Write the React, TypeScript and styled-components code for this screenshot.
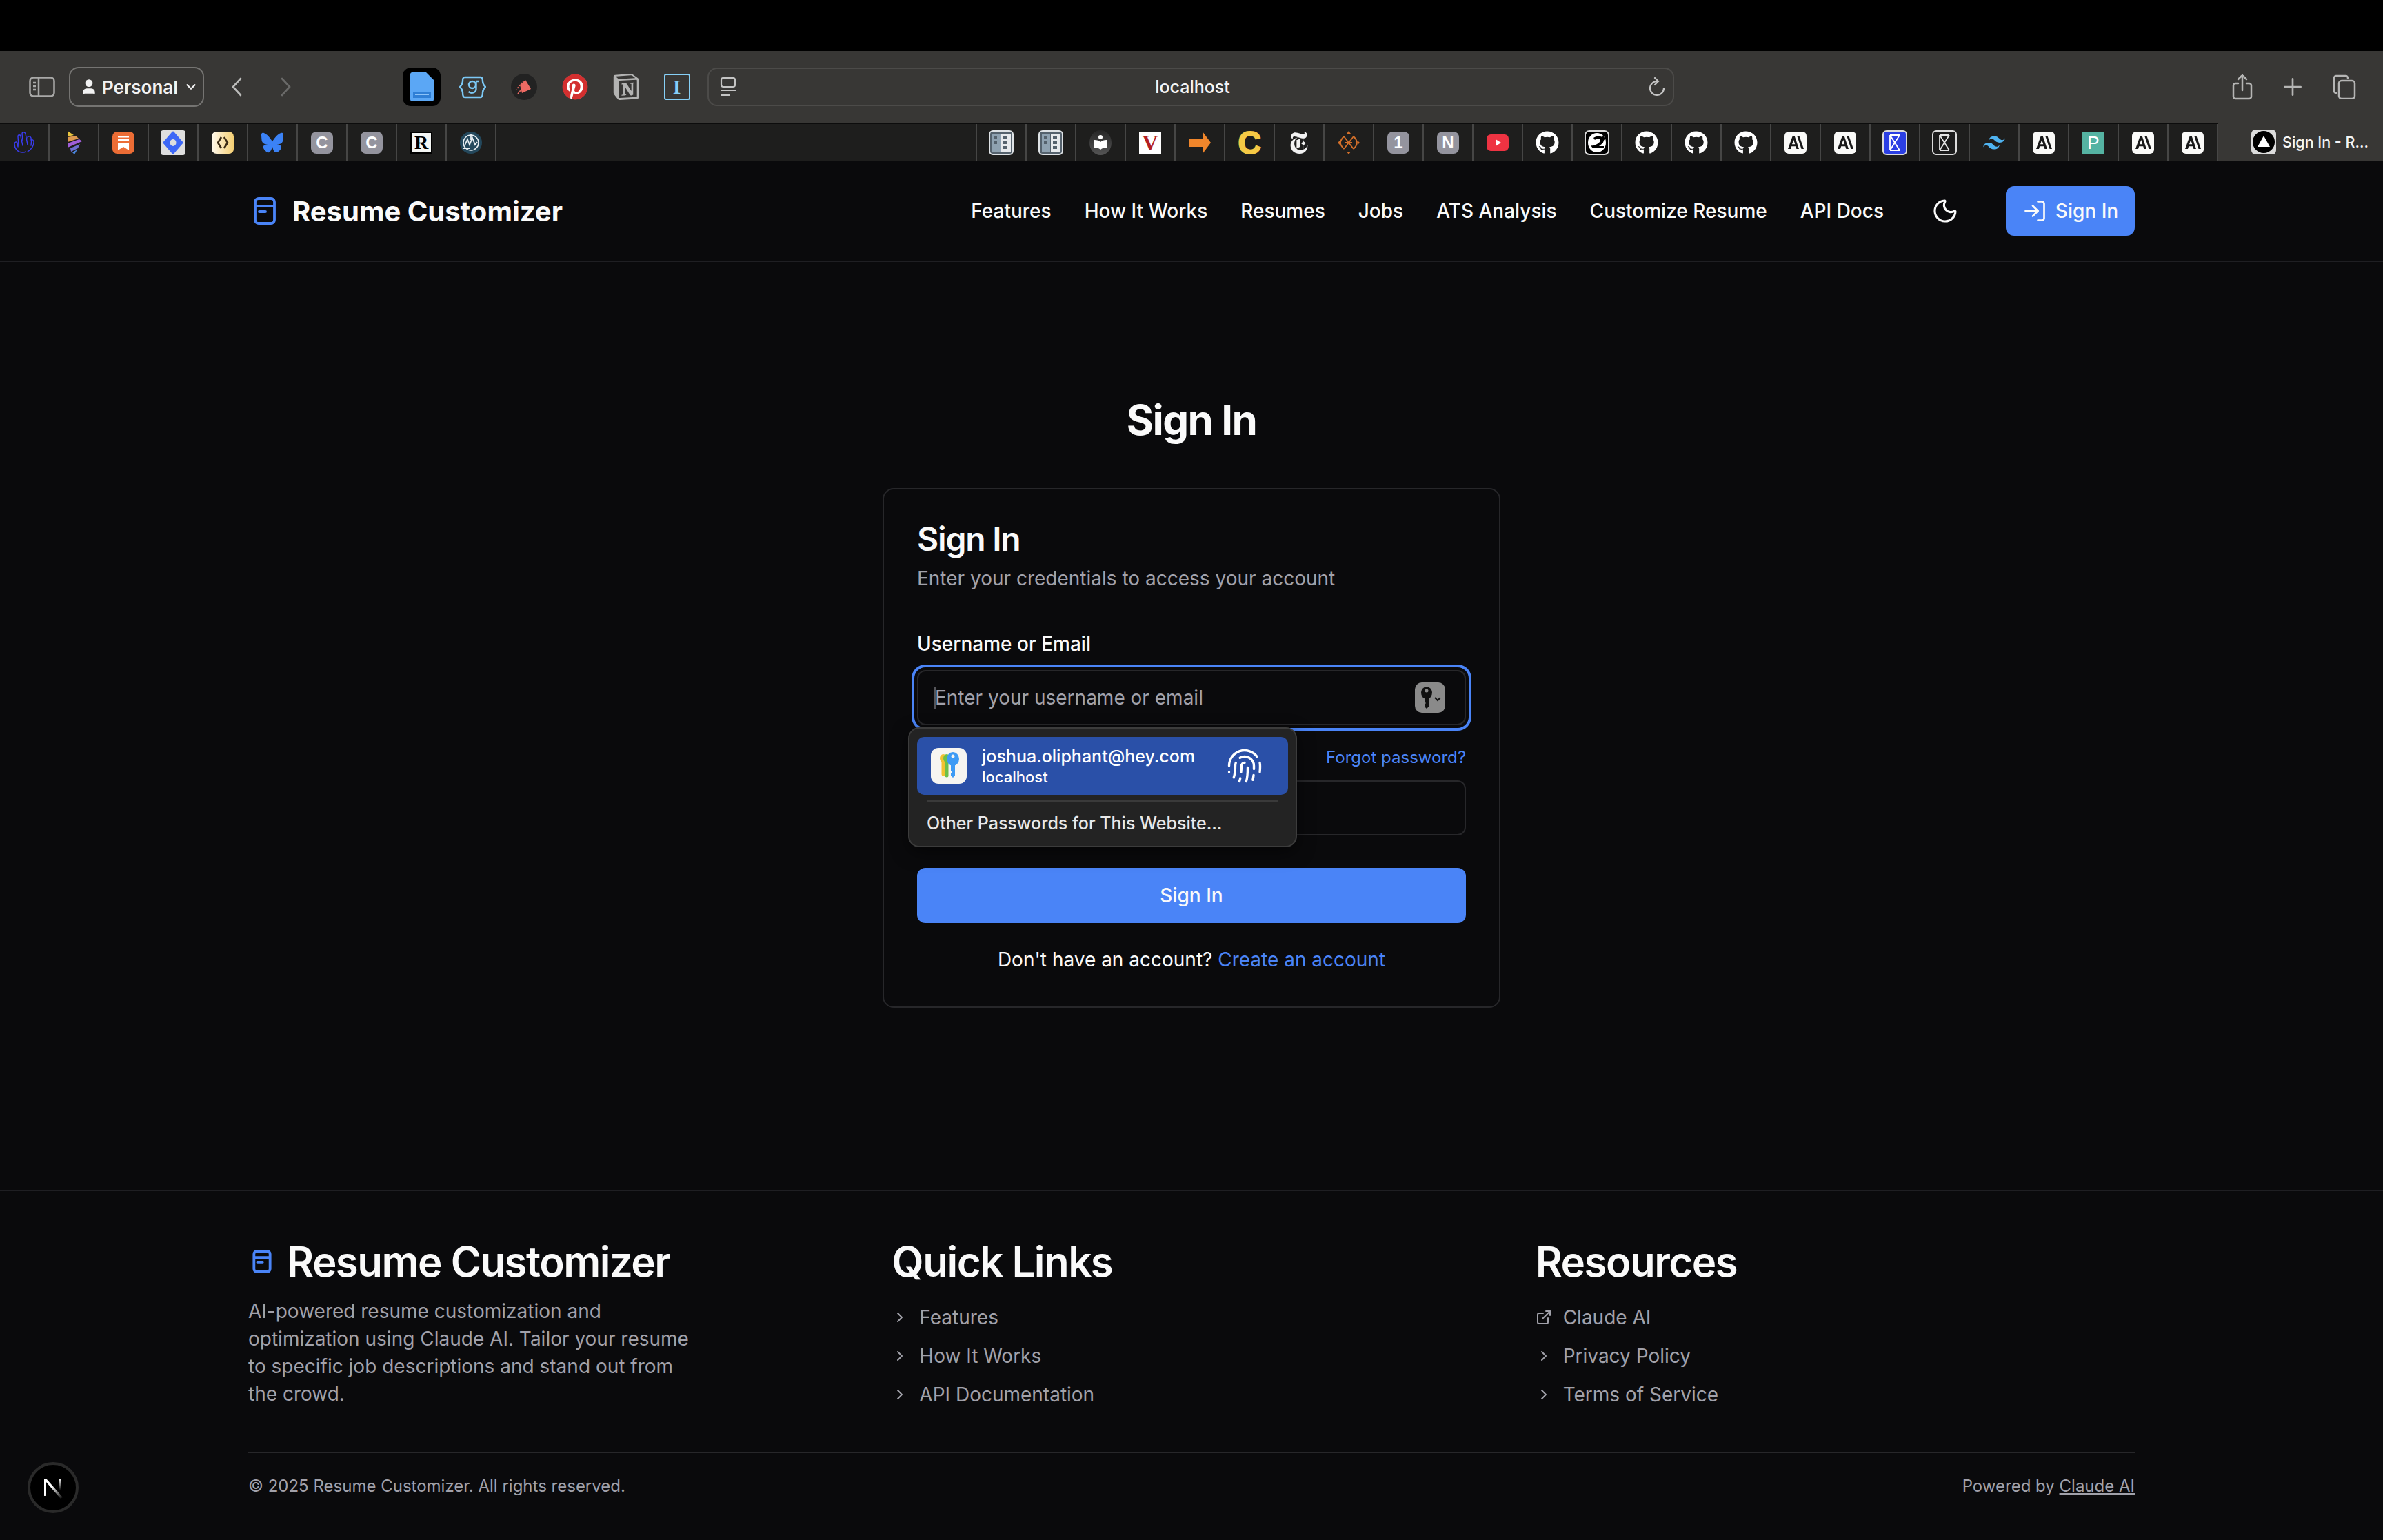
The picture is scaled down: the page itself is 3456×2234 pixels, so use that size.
import React from 'react';
import styled, { createGlobalStyle } from 'styled-components';
import { ChevronDown, ChevronRight, ExternalLink, Fingerprint, LogIn, Moon, Plus, User } from 'lucide-react';
import { FaBluesky, FaGithub, FaPinterest } from 'react-icons/fa6';
import { SiNewyorktimes, SiNotion, SiTailwindcss } from 'react-icons/si';

const GlobalStyle = createGlobalStyle`
  html, body { margin: 0; padding: 0; background: #0a0a0c; }
  * { box-sizing: border-box; }
  body { font-family: Inter, "Liberation Sans", sans-serif; color: #fafafa; }
`;

const Page = styled.div`
  display: flex;
  flex-direction: column;
  height: 2234px;
  overflow: hidden;
  position: relative;
  background: #0a0a0c;
`;

/* browser chrome */
const TopBlack = styled.div`
  height: 74px;
  background: #000;
  flex: none;
`;

const Toolbar = styled.div`
  height: 104px;
  flex: none;
  background: #383735;
  display: flex;
  align-items: center;
  padding: 0 39px 0 42px;
`;

const ChromeIcon = styled.svg<{ $ml?: number }>`
  flex: none;
  display: block;
  margin-left: ${p => p.$ml ?? 0}px;
`;

const ProfileButton = styled.div`
  margin-left: 20px;
  width: 196px;
  height: 58px;
  flex: none;
  border: 2px solid #757472;
  border-radius: 14px;
  display: flex;
  align-items: center;
  gap: 6px;
  padding-left: 14px;
  font-size: 26px;
  font-weight: 600;
  color: #f2f2f2;
`;

const ProfileChevron = styled(ChevronDown)`
  margin-left: 2px;
`;

const FavRow = styled.div`
  margin-left: 161px;
  display: flex;
  gap: 19px;
  flex: none;
`;

const FavSlot = styled.div<{ $active?: boolean }>`
  width: 55px;
  height: 56px;
  border-radius: 12px;
  display: flex;
  align-items: center;
  justify-content: center;
  background: ${p => (p.$active ? '#000' : 'transparent')};
`;

const AddressBar = styled.div`
  margin-left: 17px;
  width: 1402px;
  height: 56px;
  flex: none;
  border: 2px solid #4c4b49;
  border-radius: 14px;
  display: grid;
  grid-template-columns: 1fr auto 1fr;
  align-items: center;
  padding: 0 11px 0 16px;
`;

const AddressText = styled.div`
  font-size: 25px;
  color: #f4f4f4;
  font-weight: 500;
`;

const AddressEnd = styled.div`
  display: flex;
  justify-content: flex-end;
`;

const ToolbarRight = styled.div`
  margin-left: auto;
  display: flex;
  align-items: center;
  gap: 38px;
  color: #b5b5b4;
`;

const TabBar = styled.div`
  height: 56px;
  flex: none;
  display: flex;
  background: #383735;
`;

const TabStrip = styled.div`
  flex: 1;
  display: flex;
  justify-content: space-between;
  background: #1e1e1d;
  border-top: 2px solid #0c0c0c;
`;

const TabGroup = styled.div<{ $right?: boolean }>`
  display: flex;
  border-left: ${p => (p.$right ? '2px solid #464645' : 'none')};
`;

const PinnedTab = styled.div`
  width: 72px;
  height: 54px;
  border-right: 2px solid #464645;
  display: flex;
  align-items: center;
  justify-content: center;
  color: #fff;
`;

const ActiveTab = styled.div`
  width: 239px;
  flex: none;
  display: flex;
  align-items: center;
  padding-left: 48px;
  gap: 9px;
  font-size: 21.5px;
  font-weight: 500;
  color: #f4f4f4;
  white-space: nowrap;
`;

const LetterTile = styled.div<{ $bg: string; $color: string; $radius?: number; $serif?: boolean; $size?: number; $border?: string; $box?: number; $weight?: number }>`
  width: ${p => p.$box ?? 32}px;
  height: ${p => p.$box ?? 32}px;
  display: flex;
  align-items: center;
  justify-content: center;
  background: ${p => p.$bg};
  color: ${p => p.$color};
  border-radius: ${p => p.$radius ?? 8}px;
  border: ${p => p.$border ?? 'none'};
  font-family: ${p => (p.$serif ? '"Liberation Serif", serif' : '"Liberation Sans", sans-serif')};
  font-size: ${p => p.$size ?? 24}px;
  font-weight: ${p => p.$weight ?? 700};
`;

const BigLetter = styled.div`
  font-family: "Liberation Sans", sans-serif;
  font-size: 46px;
  font-weight: 700;
  line-height: 1;
  color: #f5c945;
  -webkit-text-stroke: 2px #f5c945;
`;

const Anthropic = () => (
  <svg width="32" height="32" viewBox="0 0 32 32">
    <rect width="32" height="32" rx="6" fill="#fafaf8" />
    <path d="M5 25 11.5 7h3.4L21 25h-3.6l-1.2-3.8h-6L9 25Zm6-6.8h4.3L13.2 12Z" fill="#191919" />
    <path d="M18.5 7h3.2L28 25h-3.5Z" fill="#191919" />
  </svg>
);

const SheetIcon = () => (
  <svg width="36" height="36" viewBox="0 0 36 36">
    <rect width="36" height="36" rx="6" fill="#dfe3e6" />
    <rect x="2" y="2" width="32" height="32" rx="4" fill="#55626d" />
    <rect x="5" y="5" width="12" height="26" fill="#8fa2b1" />
    <rect x="18" y="5" width="14" height="26" fill="#e6e9ec" />
    <rect x="8" y="9" width="4" height="4" fill="#55626d" />
    <rect x="8" y="16" width="4" height="4" fill="#55626d" />
    <rect x="21" y="9" width="6" height="4" fill="#55626d" />
    <rect x="21" y="16" width="6" height="4" fill="#55626d" />
    <rect x="21" y="23" width="6" height="4" fill="#55626d" />
  </svg>
);

const Hourglass = ({ bg, line }: { bg: string; line: string }) => (
  <svg width="36" height="36" viewBox="0 0 36 36">
    <rect x="1" y="1" width="34" height="34" rx="5" fill={bg} stroke="#dcdcdc" strokeWidth="2" />
    <path d="M11 7h14M11 29h14M11 7l14 22M25 7 11 29M11 7v22" stroke={line} strokeWidth="1.8" fill="none" />
  </svg>
);

type TabKind =
  | 'hand' | 'cone' | 'substack' | 'diamond' | 'code' | 'bluesky' | 'c' | 'r' | 'globe'
  | 'sheet' | 'book' | 'v' | 'arrow' | 'bigC' | 'nyt' | 'ornament' | 'one' | 'n' | 'youtube'
  | 'github' | 'swirl' | 'anthropic' | 'glassBlue' | 'glassDark' | 'tailwind' | 'p';

const leftTabs: TabKind[] = ['hand', 'cone', 'substack', 'diamond', 'code', 'bluesky', 'c', 'c', 'r', 'globe'];
const rightTabs: TabKind[] = [
  'sheet', 'sheet', 'book', 'v', 'arrow', 'bigC', 'nyt', 'ornament', 'one', 'n', 'youtube', 'github', 'swirl',
  'github', 'github', 'github', 'anthropic', 'anthropic', 'glassBlue', 'glassDark', 'tailwind', 'anthropic', 'p',
  'anthropic', 'anthropic',
];

const TabIcon = ({ kind }: { kind: TabKind }) => {
  switch (kind) {
    case 'hand':
      return (
        <svg width="30" height="32" viewBox="0 0 30 32" fill="none" stroke="#3a3cf0" strokeWidth="1.4" strokeLinecap="round">
          <path d="M1 18c0 6 4 12 12 12 2 0 3 0 4-1" />
          <path d="M1 18c0-3 3-4 4-2l1 6" />
          <path d="M7 21 6 7c0-3 4-3 4 0l3 13" />
          <path d="M13 13 12 3c0-3 4-3 5 0l3 16" />
          <path d="M20 9c0-3 4-3 5 0 1 4 1 5 0 11" />
          <path d="M25 12c2-1 4 0 4 3 0 6-4 11-9 14" />
        </svg>
      );
    case 'cone':
      return (
        <svg width="24" height="34" viewBox="0 0 24 34">
          <path d="M3 0 12 6 3 8Z" fill="#e8c53e" />
          <path d="M3 9 15 7l4 4-16 5Z" fill="#dd9850" />
          <path d="M3 18l17-6 4 3L3 24Z" fill="#a05ed8" />
          <path d="M7 25l14-6-3 6-10 5Z" fill="#6d6fd0" />
          <path d="M10 31l7-4-4 7Z" fill="#4a86e0" />
        </svg>
      );
    case 'substack':
      return (
        <svg width="32" height="32" viewBox="0 0 32 32">
          <rect width="32" height="32" rx="7" fill="#ec6d35" />
          <path d="M8 6h16v2.5H8ZM8 11h16v2.5H8ZM8 16h16v11l-8-5-8 5Z" fill="#fff" />
        </svg>
      );
    case 'diamond':
      return (
        <svg width="36" height="36" viewBox="0 0 36 36">
          <rect width="36" height="36" rx="4" fill="#dedede" />
          <path d="M18 3 31 18 18 33 5 18Z" fill="#3d67f6" stroke="#3d67f6" strokeWidth="3" strokeLinejoin="round" />
          <ellipse cx="18" cy="18" rx="4.5" ry="5" fill="#dedede" />
        </svg>
      );
    case 'code':
      return (
        <svg width="32" height="32" viewBox="0 0 32 32">
          <defs>
            <linearGradient id="creamTile" x1="0" x2="1" y1="0" y2="0">
              <stop offset="0" stopColor="#fff9ec" />
              <stop offset="1" stopColor="#f4cf72" />
            </linearGradient>
          </defs>
          <rect width="32" height="32" rx="7" fill="url(#creamTile)" />
          <path d="M14 8 9 16l5 8M18 8l5 8-5 8" fill="none" stroke="#3a2a14" strokeWidth="2.6" />
        </svg>
      );
    case 'bluesky':
      return <FaBluesky size={32} color="#3b82f6" />;
    case 'c':
      return <LetterTile $bg="#94949e" $color="#fff">C</LetterTile>;
    case 'r':
      return <LetterTile $bg="#f4f6f4" $color="#000" $radius={0} $serif $size={28} $border="2px solid #000">R</LetterTile>;
    case 'globe':
      return (
        <svg width="32" height="32" viewBox="0 0 32 32" fill="none">
          <circle cx="16" cy="16" r="16" fill="#24485c" />
          <path d="M5 24h9M7 20l4-9 3 8 4-10 4 10 3-4M16 4v8" stroke="#e8eef2" strokeWidth="1.8" />
          <circle cx="16" cy="16" r="11" stroke="#e8eef2" strokeWidth="1.5" />
        </svg>
      );
    case 'sheet':
      return <SheetIcon />;
    case 'book':
      return (
        <svg width="32" height="36" viewBox="0 0 32 36">
          <defs>
            <linearGradient id="bookShade" x1="0" x2="0" y1="0" y2="1">
              <stop offset="0" stopColor="#262626" />
              <stop offset="1" stopColor="#555" />
            </linearGradient>
          </defs>
          <ellipse cx="16" cy="18" rx="16" ry="18" fill="url(#bookShade)" />
          <circle cx="16" cy="10" r="3" fill="#fff" />
          <path d="M7 14c4 0 7 1 9 3 2-2 5-3 9-3v11c-4 0-7 1-9 3-2-2-5-3-9-3Z" fill="#fff" />
        </svg>
      );
    case 'v':
      return <LetterTile $bg="#fff" $color="#b31e22" $radius={0} $serif $size={32}>V</LetterTile>;
    case 'arrow':
      return (
        <svg width="32" height="32" viewBox="0 0 32 32">
          <path d="M0 10h20V0l12 16-12 16V22H0Z" fill="#f0862b" />
        </svg>
      );
    case 'bigC':
      return <BigLetter>C</BigLetter>;
    case 'nyt':
      return <SiNewyorktimes size={32} color="#f2f2f2" />;
    case 'ornament':
      return (
        <svg width="32" height="34" viewBox="0 0 32 34" fill="none" stroke="#d4702a" strokeWidth="1.8">
          <path d="M9 8l14 18M23 8 9 26M9 8c-3 3-5 6-5 9s2 6 5 9M23 8c3 3 5 6 5 9s-2 6-5 9M11 17h10" />
          <path d="M16 0l3 4h-6ZM16 34l3-4h-6ZM0 17l3-3v6ZM32 17l-3-3v6Z" fill="#d4702a" stroke="none" />
        </svg>
      );
    case 'one':
      return <LetterTile $bg="#94949e" $color="#fff">1</LetterTile>;
    case 'n':
      return <LetterTile $bg="#94949e" $color="#fff">N</LetterTile>;
    case 'youtube':
      return (
        <svg width="32" height="24" viewBox="0 0 32 24">
          <rect width="32" height="24" rx="6" fill="#ee3342" />
          <path d="M13 7l8 5-8 5Z" fill="#fff" />
        </svg>
      );
    case 'github':
      return <FaGithub size={34} color="#fff" />;
    case 'swirl':
      return (
        <svg width="36" height="36" viewBox="0 0 36 36">
          <rect x="1" y="1" width="34" height="34" rx="6" fill="#000" stroke="#dcdcdc" strokeWidth="2" />
          <ellipse cx="18" cy="18" rx="13" ry="14" fill="#fff" />
          <path d="M9 22c4 1 9-1 13-5 2-2 1-5-2-5-2 0-4 1-5 2l-2-3c3-2 7-3 10-2 5 1 6 7 3 10l-5 4h7v3H12Z" fill="#000" />
          <path d="M27 8l-3 4 3 4 3-4Z" fill="#000" />
        </svg>
      );
    case 'anthropic':
      return <Anthropic />;
    case 'glassBlue':
      return <Hourglass bg="#2b3fe4" line="#fff" />;
    case 'glassDark':
      return <Hourglass bg="#1c1c1c" line="#e4e4e4" />;
    case 'tailwind':
      return <SiTailwindcss size={32} color="#4fb3f0" />;
    case 'p':
      return <LetterTile $bg="#55b3a2" $color="#fff" $radius={0} $size={26} $weight={400}>P</LetterTile>;
  }
};

/* site header */
const SiteHeader = styled.header`
  height: 146px;
  flex: none;
  border-bottom: 2px solid #1f1f23;
  display: flex;
  align-items: center;
`;

const HeaderInner = styled.div`
  width: 2736px;
  margin: 0 auto;
  display: flex;
  align-items: center;
  justify-content: space-between;
`;

const Brand = styled.div`
  display: flex;
  align-items: center;
  gap: 16px;
  font-size: 40px;
  font-weight: 700;
  color: #fafafa;
`;

const Nav = styled.nav`
  display: flex;
  align-items: center;
  gap: 48px;
  font-size: 28px;
  font-weight: 500;
  color: #fafafa;
`;

const MoonButton = styled.div`
  margin-left: 21px;
  width: 40px;
  height: 40px;
  display: flex;
  align-items: center;
  justify-content: center;
  color: #fafafa;
`;

const HeaderSignIn = styled.div`
  margin-left: 20px;
  height: 72px;
  width: 187px;
  border-radius: 12px;
  background: #4a84f7;
  display: flex;
  align-items: center;
  justify-content: center;
  gap: 12px;
`;

/* sign in form */
const Main = styled.main`
  flex: 1;
  display: flex;
  flex-direction: column;
  align-items: center;
  padding-top: 193px;
`;

const PageTitle = styled.h1`
  margin: 0 0 63px;
  font-size: 60px;
  line-height: 72px;
  font-weight: 700;
  letter-spacing: -1.5px;
`;

const Card = styled.div`
  width: 896px;
  border: 2px solid #27272a;
  border-radius: 16px;
  padding: 48px;
`;

const CardTitle = styled.h2`
  margin: 0 0 13px;
  font-size: 48px;
  line-height: 48px;
  font-weight: 600;
  letter-spacing: -1.2px;
`;

const CardText = styled.p`
  margin: 0 0 61px;
  font-size: 28px;
  line-height: 40px;
  color: #a1a1aa;
`;

const FieldLabel = styled.label`
  display: block;
  font-size: 28px;
  line-height: 28px;
  font-weight: 500;
`;

const InputWrap = styled.div`
  position: relative;
  margin-top: 24px;
`;

const TextInput = styled.input<{ $focused?: boolean }>`
  display: block;
  width: 100%;
  height: 80px;
  padding: 0 24px;
  background: #0a0a0c;
  border: 2px solid #27272a;
  border-radius: 12px;
  font: 400 28px Inter, sans-serif;
  color: #fafafa;
  outline: none;
  box-shadow: ${p => (p.$focused ? '0 0 0 4px #0a0a0c, 0 0 0 8px #4a84f7' : 'none')};
  &::placeholder { color: #a1a1aa; opacity: 1; }
`;

const Caret = styled.div`
  position: absolute;
  left: 25px;
  top: 24px;
  width: 2px;
  height: 33px;
  background: #55555a;
`;

const KeyBadge = styled.div`
  position: absolute;
  right: 30px;
  top: 18px;
  width: 44px;
  height: 44px;
  border-radius: 10px;
  background: #8a8a8a;
  display: flex;
  align-items: center;
  justify-content: center;
`;

const PasswordRow = styled.div`
  margin-top: 26px;
  height: 40px;
  display: flex;
  align-items: center;
  justify-content: flex-end;
`;

const SmallLink = styled.a`
  font-size: 24px;
  color: #4a84f7;
`;

const PasswordInputWrap = styled.div`
  margin-top: 14px;
`;

const SubmitButton = styled.button`
  display: block;
  width: 100%;
  height: 80px;
  margin-top: 47px;
  border: none;
  border-radius: 12px;
  background: #4a84f7;
  color: #fafafa;
  font: 500 28px Inter, sans-serif;
`;

const SwitchText = styled.div`
  margin-top: 33px;
  text-align: center;
  font-size: 28px;
  line-height: 40px;
`;

const BlueLink = styled.a`
  color: #4a84f7;
`;

/* password autofill popup */
const Autofill = styled.div`
  position: absolute;
  left: -13px;
  top: 83px;
  width: 564px;
  height: 174px;
  z-index: 5;
  background: #232323;
  border: 2px solid #3c3c3c;
  border-radius: 16px;
  padding: 12px 11px 0;
  box-shadow: 0 8px 24px rgba(0, 0, 0, 0.5);
`;

const AutofillRow = styled.div`
  height: 84px;
  border-radius: 10px;
  background: #2a50a8;
  display: flex;
  align-items: center;
  padding-left: 20px;
  color: #fff;
`;

const AutofillLines = styled.div`
  margin-left: 22px;
  flex: 1;
`;

const AutofillEmail = styled.div`
  font-size: 25px;
  line-height: 32px;
  font-weight: 500;
`;

const AutofillHost = styled.div`
  font-size: 22px;
  line-height: 28px;
  font-weight: 500;
`;

const AutofillPrint = styled(Fingerprint)`
  margin-right: 36px;
`;

const AutofillDivider = styled.div`
  height: 2px;
  margin: 8px 14px 0;
  background: #3a3a3a;
`;

const AutofillOther = styled.div`
  padding: 15px 14px 0;
  font-size: 25px;
  line-height: 32px;
  font-weight: 500;
  color: #e8e8e8;
`;

/* footer */
const Footer = styled.footer`
  flex: none;
  height: 508px;
  border-top: 2px solid #1f1f23;
  padding-top: 66px;
`;

const FooterInner = styled.div`
  width: 2736px;
  margin: 0 auto;
`;

const FooterGrid = styled.div`
  display: grid;
  grid-template-columns: repeat(3, 1fr);
  gap: 64px;
  height: 312px;
`;

const FooterHeading = styled.h3`
  margin: 0;
  display: flex;
  align-items: center;
  gap: 16px;
  font-size: 60px;
  line-height: 72px;
  font-weight: 600;
  letter-spacing: -1.5px;
`;

const FooterText = styled.p`
  margin: 16px 0 0;
  max-width: 640px;
  font-size: 28px;
  line-height: 40px;
  color: #a1a1aa;
`;

const FooterLinks = styled.ul`
  list-style: none;
  margin: 25px 0 0;
  padding: 0;
  display: flex;
  flex-direction: column;
  gap: 16px;
`;

const FooterLinkItem = styled.li`
  display: flex;
  align-items: center;
  gap: 16px;
  font-size: 28px;
  line-height: 40px;
  color: #a1a1aa;
`;

const FooterBottom = styled.div`
  border-top: 2px solid #27272a;
  padding-top: 32px;
  display: flex;
  justify-content: space-between;
  font-size: 24px;
  line-height: 32px;
  color: #a1a1aa;
`;

const Underlined = styled.a`
  text-decoration: underline;
`;

const DevBadge = styled.div`
  position: absolute;
  left: 40px;
  top: 2121px;
  width: 74px;
  height: 74px;
  border-radius: 50%;
  background: #000;
  border: 4px solid #2a2a2a;
  display: flex;
  align-items: center;
  justify-content: center;
`;

const LogoIcon = ({ size }: { size: number }) => (
  <svg width={size} height={size} viewBox="0 0 48 48" fill="none" stroke="#4a84f7" strokeWidth={4.5 * (48 / size) * 0.85} strokeLinecap="round">
    <rect x="10" y="6" width="28" height="36" rx="5" />
    <path d="M11 17h26M16 25h9" />
  </svg>
);

const KeyAppIcon = () => (
  <svg width="52" height="52" viewBox="0 0 52 52">
    <rect width="52" height="52" rx="11" fill="#f6f5f1" />
    <g fill="none" strokeWidth="5" strokeLinecap="round">
      <path d="M18 20v18" stroke="#f1c232" />
      <path d="M23 20v20" stroke="#6cc04a" />
    </g>
    <ellipse cx="18" cy="15" rx="5" ry="6" fill="#f1c232" />
    <ellipse cx="23" cy="15" rx="5" ry="6" fill="#6cc04a" />
    <ellipse cx="32" cy="16" rx="9" ry="10" fill="#3d9bf5" />
    <path d="M29 24h6v16l-3 3-3-3v-3l2-2-2-2Z" fill="#3d9bf5" />
    <circle cx="32" cy="12" r="2.5" fill="#f6f5f1" />
  </svg>
);

const navItems = ['Features', 'How It Works', 'Resumes', 'Jobs', 'ATS Analysis', 'Customize Resume', 'API Docs'];

const App: React.FC = () => {
  return (
    <Page>
      <GlobalStyle />
      <TopBlack />
      <Toolbar>
        <ChromeIcon width="38" height="30" viewBox="0 0 38 30" fill="none" stroke="#a9a9a8" strokeWidth="2.5">
          <rect x="1.5" y="1.5" width="35" height="27" rx="5" />
          <path d="M14 2v26M6 9h4M6 14h4M6 19h4" />
        </ChromeIcon>
        <ProfileButton>
          <User size={26} fill="#f2f2f2" stroke="#f2f2f2" />
          Personal
          <ProfileChevron size={22} strokeWidth={2.5} />
        </ProfileButton>
        <ChromeIcon $ml={39} width="16" height="28" viewBox="0 0 16 28" fill="none" stroke="#bcbcbb" strokeWidth="2.6" strokeLinecap="round">
          <path d="M14 2 3 14l11 12" />
        </ChromeIcon>
        <ChromeIcon $ml={56} width="16" height="28" viewBox="0 0 16 28" fill="none" stroke="#6a6a69" strokeWidth="2.6" strokeLinecap="round">
          <path d="M2 2l11 12L2 26" />
        </ChromeIcon>
        <FavRow>
          <FavSlot $active>
            <svg width="34" height="42" viewBox="0 0 34 42">
              <path d="M3 0h20l11 11v28a3 3 0 0 1-3 3H3a3 3 0 0 1-3-3V3a3 3 0 0 1 3-3Z" fill="#5ba7f5" />
              <rect x="4" y="28" width="26" height="9" fill="#2f7fd6" />
              <rect x="7" y="31" width="20" height="2" fill="#8cc3f8" />
            </svg>
          </FavSlot>
          <FavSlot>
            <svg width="39" height="33" viewBox="0 0 39 33" fill="none" stroke="#7cc8f5" strokeWidth="2.4">
              <path d="M8 2h23c3 0 3 3 3 6s1 5 4 8c-3 3-4 5-4 8s0 7-3 7H8c-3 0-3-4-3-7s-1-5-4-8c3-3 4-5 4-8s0-6 3-6Z" />
              <circle cx="19" cy="13" r="5" />
              <path d="M24 8h4M24.500 9v10c0 6-7 7-11 4" />
            </svg>
          </FavSlot>
          <FavSlot>
            <svg width="38" height="38" viewBox="0 0 38 38">
              <circle cx="19" cy="19" r="19" fill="#222" />
              <path d="M13 16l8-7 8 13-13 6Z" fill="#ee6a63" />
              <path d="M7 24L19 9M10 29l12-15" stroke="#ee6a63" strokeWidth="1.6" strokeDasharray="2 2" />
            </svg>
          </FavSlot>
          <FavSlot>
            <svg width="38" height="38" viewBox="0 0 38 38">
              <circle cx="19" cy="19" r="18" fill="#fff" />
              <FaPinterest x="0" y="0" size={38} color="#d32f2f" />
            </svg>
          </FavSlot>
          <FavSlot>
            <SiNotion size={38} color="#b3b3b2" />
          </FavSlot>
          <FavSlot>
            <LetterTile $box={38} $bg="transparent" $color="#86d0f7" $radius={3} $serif $size={30} $border="2px solid #86d0f7">I</LetterTile>
          </FavSlot>
        </FavRow>
        <AddressBar>
          <ChromeIcon width="24" height="28" viewBox="0 0 24 28" fill="none" stroke="#c4c4c4" strokeWidth="2.2">
            <rect x="2" y="1" width="20" height="13" rx="3" />
            <path d="M1 19h22M1 26h14" />
          </ChromeIcon>
          <AddressText>localhost</AddressText>
          <AddressEnd>
            <ChromeIcon width="24" height="28" viewBox="0 0 24 28" fill="none" stroke="#c4c4c4" strokeWidth="2.2" strokeLinecap="round">
              <path d="M12 6a10 10 0 1 0 10 10" />
              <path d="M9 1l5 5-5 5" />
            </ChromeIcon>
          </AddressEnd>
        </AddressBar>
        <ToolbarRight>
          <ChromeIcon width="30" height="38" viewBox="0 0 30 38" fill="none" stroke="#b5b5b4" strokeWidth="2.5" strokeLinecap="round">
            <path d="M15 2v22M9 8l6-6 6 6M9 14H5a3 3 0 0 0-3 3v16a3 3 0 0 0 3 3h20a3 3 0 0 0 3-3V17a3 3 0 0 0-3-3h-4" />
          </ChromeIcon>
          <Plus size={40} strokeWidth={1.6} />
          <ChromeIcon width="34" height="36" viewBox="0 0 34 36" fill="none" stroke="#b5b5b4" strokeWidth="2.5">
            <path d="M6 27H5a3 3 0 0 1-3-3V5a3 3 0 0 1 3-3h14a3 3 0 0 1 3 3v2" />
            <rect x="9" y="9" width="23" height="26" rx="4" />
          </ChromeIcon>
        </ToolbarRight>
      </Toolbar>

      <TabBar>
        <TabStrip>
          <TabGroup>
            {leftTabs.map((kind, i) => (
              <PinnedTab key={i}><TabIcon kind={kind} /></PinnedTab>
            ))}
          </TabGroup>
          <TabGroup $right>
            {rightTabs.map((kind, i) => (
              <PinnedTab key={i}><TabIcon kind={kind} /></PinnedTab>
            ))}
          </TabGroup>
        </TabStrip>
        <ActiveTab>
          <svg width="36" height="36" viewBox="0 0 36 36">
            <rect width="36" height="36" rx="6" fill="#dcdcdc" />
            <circle cx="18" cy="18" r="16" fill="#000" />
            <path d="M18 9l9 16H9Z" fill="#fff" />
          </svg>
          Sign In - R...
        </ActiveTab>
      </TabBar>

      <SiteHeader>
        <HeaderInner>
          <Brand>
            <LogoIcon size={48} />
            Resume Customizer
          </Brand>
          <Nav>
            {navItems.map(item => (
              <span key={item}>{item}</span>
            ))}
            <MoonButton><Moon size={40} strokeWidth={1.9} /></MoonButton>
            <HeaderSignIn>
              <LogIn size={36} strokeWidth={1.8} />
              Sign In
            </HeaderSignIn>
          </Nav>
        </HeaderInner>
      </SiteHeader>

      <Main>
        <PageTitle>Sign In</PageTitle>
        <Card>
          <CardTitle>Sign In</CardTitle>
          <CardText>Enter your credentials to access your account</CardText>
          <FieldLabel>Username or Email</FieldLabel>
          <InputWrap>
            <TextInput $focused placeholder="Enter your username or email" readOnly />
            <Caret />
            <KeyBadge>
              <svg width="36" height="36" viewBox="0 0 36 36">
                <ellipse cx="13" cy="11" rx="8" ry="9" fill="#111" />
                <circle cx="13" cy="8" r="2.5" fill="#8a8a8a" />
                <path d="M10 18h6v13l-3 3-3-3v-3l2-2-2-2Z" fill="#111" />
                <path d="M25 18l4 4 4-4" fill="none" stroke="#111" strokeWidth="2" />
              </svg>
            </KeyBadge>
            <Autofill>
              <AutofillRow>
                <KeyAppIcon />
                <AutofillLines>
                  <AutofillEmail>joshua.oliphant@hey.com</AutofillEmail>
                  <AutofillHost>localhost</AutofillHost>
                </AutofillLines>
                <AutofillPrint size={54} strokeWidth={1.5} />
              </AutofillRow>
              <AutofillDivider />
              <AutofillOther>Other Passwords for This Website...</AutofillOther>
            </Autofill>
          </InputWrap>
          <PasswordRow>
            <SmallLink>Forgot password?</SmallLink>
          </PasswordRow>
          <PasswordInputWrap>
            <TextInput readOnly />
          </PasswordInputWrap>
          <SubmitButton>Sign In</SubmitButton>
          <SwitchText>
            Don't have an account? <BlueLink>Create an account</BlueLink>
          </SwitchText>
        </Card>
      </Main>

      <Footer>
        <FooterInner>
          <FooterGrid>
            <div>
              <FooterHeading>
                <LogoIcon size={40} />
                Resume Customizer
              </FooterHeading>
              <FooterText>
                AI-powered resume customization and optimization using Claude AI. Tailor your resume to specific job descriptions and stand out from the crowd.
              </FooterText>
            </div>
            <div>
              <FooterHeading>Quick Links</FooterHeading>
              <FooterLinks>
                {['Features', 'How It Works', 'API Documentation'].map(link => (
                  <FooterLinkItem key={link}><ChevronRight size={24} />{link}</FooterLinkItem>
                ))}
              </FooterLinks>
            </div>
            <div>
              <FooterHeading>Resources</FooterHeading>
              <FooterLinks>
                <FooterLinkItem><ExternalLink size={24} />Claude AI</FooterLinkItem>
                <FooterLinkItem><ChevronRight size={24} />Privacy Policy</FooterLinkItem>
                <FooterLinkItem><ChevronRight size={24} />Terms of Service</FooterLinkItem>
              </FooterLinks>
            </div>
          </FooterGrid>
          <FooterBottom>
            <span>© 2025 Resume Customizer. All rights reserved.</span>
            <span>Powered by <Underlined>Claude AI</Underlined></span>
          </FooterBottom>
        </FooterInner>
      </Footer>

      <DevBadge>
        <svg width="32" height="32" viewBox="0 0 32 32">
          <defs>
            <linearGradient id="nFade" x1="0" y1="0" x2="1" y2="1">
              <stop offset="0.4" stopColor="#fff" />
              <stop offset="1" stopColor="#fff" stopOpacity="0" />
            </linearGradient>
            <linearGradient id="nBar" x1="0" y1="0" x2="0" y2="1">
              <stop offset="0" stopColor="#fff" />
              <stop offset="1" stopColor="#fff" stopOpacity="0" />
            </linearGradient>
          </defs>
          <path d="M3 3h3l24 27-3 2L6 8v20H3Z" fill="url(#nFade)" />
          <rect x="24" y="3" width="3" height="17" fill="url(#nBar)" />
        </svg>
      </DevBadge>
    </Page>
  );
};

export default App;
